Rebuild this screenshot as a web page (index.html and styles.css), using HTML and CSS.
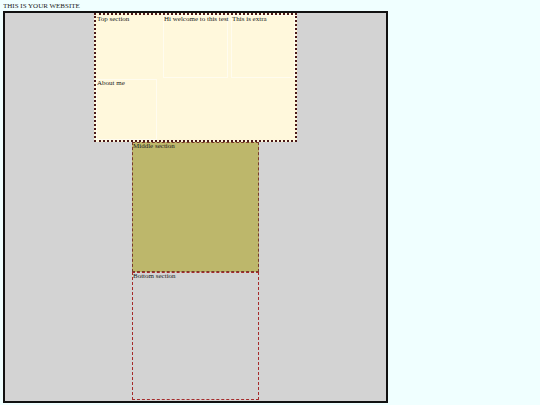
FILE: index.html
```html
<!DOCTYPE html>
<html lang="en">
<head>
    <meta charset="UTF-8">
    <meta name="viewport" content="width=device-width, initial-scale=1.0">
    <title>Your Website</title>
    <link rel="stylesheet" href="styles.css">
</head>
<body>

<div class="site-title">THIS IS YOUR WEBSITE</div>

<div class="site">
    <div class="top-section">
        <div class="cell cell-plain">Top section</div>
        <div class="cell">Hi welcome to this test</div>
        <div class="cell">This is extra</div>
        <div class="cell cell-about">About me</div>
    </div>
    <div class="middle-section">Middle section</div>
    <div class="bottom-section">Bottom section</div>
</div>

</body>
</html>
```

FILE: styles.css
```css
body {
    margin: 3px;
    background-color: azure;
    font-family: "Liberation Serif", "Times New Roman", serif;
    font-size: 7px;
    line-height: 7px;
    color: #222;
}
.site-title {
    height: 8px;
}
.site {
    height: 392px;
    width: 385px;
    box-sizing: border-box;
    border: 2px solid #111;
    background-color: lightgray;
    display: flex;
    flex-direction: column;
    align-items: center;
}
.top-section {
    width: 203px;
    height: 129px;
    flex-shrink: 0;
    box-sizing: border-box;
    border: 2px dotted #4a1818;
    background-color: cornsilk;
    display: grid;
    grid-template-columns: 67px 68px 1fr;
    grid-template-rows: 63px 1fr;
    row-gap: 1px;
}
.cell {
    margin-right: 3px;
    border: 1px solid #fffcef;
    white-space: nowrap;
}
.cell:nth-child(3) {
    margin-right: 0;
}
.cell-plain {
    border-color: transparent;
}
.cell-about {
    margin-right: 6px;
}
.middle-section {
    width: 127px;
    height: 130px;
    flex-shrink: 0;
    box-sizing: border-box;
    border: 1px dashed #7a3a2a;
    background-color: darkkhaki;
}
.bottom-section {
    width: 127px;
    height: 128px;
    flex-shrink: 0;
    box-sizing: border-box;
    border: 1px dashed #a52a2a;
}
```
